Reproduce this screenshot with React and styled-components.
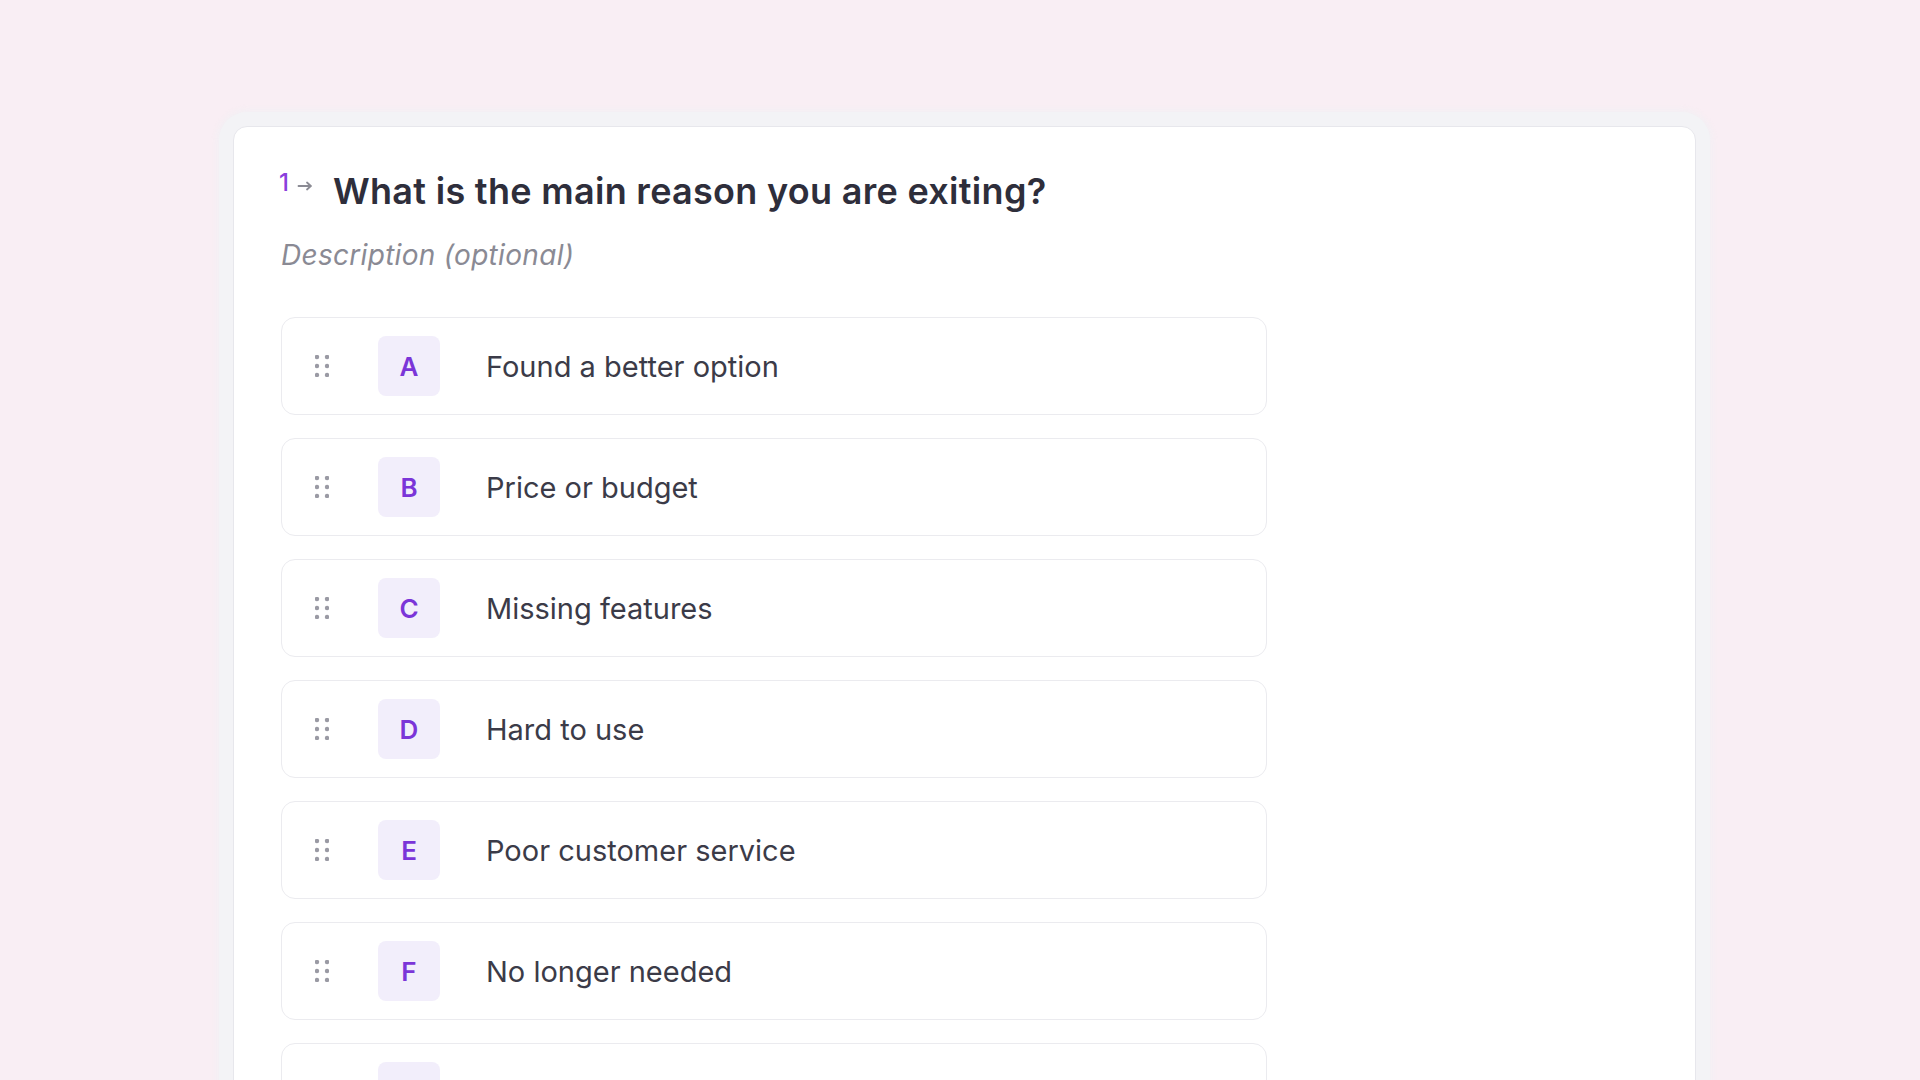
import React from 'react';
import styled, { createGlobalStyle } from 'styled-components';

const GlobalStyle = createGlobalStyle`
  html, body {
    margin: 0;
    padding: 0;
    height: 100%;
    overflow: hidden;
    background: #f9eef4;
    font-family: Inter, "Liberation Sans", sans-serif;
  }
`;

const options = [
  { key: 'A', label: 'Found a better option' },
  { key: 'B', label: 'Price or budget' },
  { key: 'C', label: 'Missing features' },
  { key: 'D', label: 'Hard to use' },
  { key: 'E', label: 'Poor customer service' },
  { key: 'F', label: 'No longer needed' },
  { key: 'G', label: 'Other' },
];

const DragHandle = () => (
  <svg width="14" height="22" viewBox="0 0 14 22">
    {[2, 11, 20].map(cy => (
      <g key={cy} fill="#9a9aa4">
        <circle cx="2" cy={cy} r="2.2" />
        <circle cx="12" cy={cy} r="2.2" />
      </g>
    ))}
  </svg>
);

const Arrow = () => (
  <svg width="16" height="10" viewBox="0 0 16 10" fill="none" stroke="#8b8b94" strokeWidth="1.8" strokeLinecap="round" strokeLinejoin="round">
    <path d="M1.5 5h12.5M10 1.5 13.8 5 10 8.5" />
  </svg>
);

export default function App() {
  return (
    <>
      <GlobalStyle />
      <Page>
        <Card>
          <Header>
            <Number>1</Number>
            <ArrowWrap><Arrow /></ArrowWrap>
            <Title>What is the main reason you are exiting?</Title>
          </Header>
          <Description>Description (optional)</Description>
          <OptionList>
            {options.map(o => (
              <OptionRow key={o.key}>
                <Handle><DragHandle /></Handle>
                <Badge>{o.key}</Badge>
                <Label>{o.label}</Label>
              </OptionRow>
            ))}
          </OptionList>
        </Card>
      </Page>
    </>
  );
}

// page wrapper
const Page = styled.div`
  padding: 126px 0 0 233px;
  display: flex;
`;

// white question card with pale halo
const Card = styled.div`
  width: 1463px;
  box-sizing: border-box;
  min-height: 1000px;
  background: #fff;
  border: 1px solid #e7e7ec;
  border-radius: 14px;
  padding: 44px 47px;
  box-shadow: 0 0 0 14px #f3f3f6, 0 0 6px 16px rgba(240, 240, 244, 0.8);
`;

const Header = styled.div`
  display: flex;
  align-items: flex-start;
`;

const Number = styled.span`
  margin-left: -2px;
  font-size: 24px;
  line-height: 24px;
  font-weight: 500;
  color: #8a3fdc;
`;

const ArrowWrap = styled.span`
  display: flex;
  margin: 10px 0 0 8px;
`;

const Title = styled.h1`
  margin: 0 0 0 20px;
  font-size: 36px;
  line-height: 40px;
  font-weight: 600;
  letter-spacing: 0.3px;
  color: #2e2e3b;
`;

const Description = styled.div`
  margin-top: 28px;
  font-size: 28px;
  line-height: 32px;
  font-style: italic;
  color: #8a8a94;
  letter-spacing: 0.3px;
`;

const OptionList = styled.div`
  margin-top: 46px;
  width: 986px;
  display: flex;
  flex-direction: column;
  gap: 23px;
`;

const OptionRow = styled.div`
  height: 98px;
  box-sizing: border-box;
  display: flex;
  align-items: center;
  padding-left: 33px;
  border: 1px solid #ebebef;
  border-radius: 14px;
  background: #fff;
`;

const Handle = styled.span`
  display: flex;
  width: 14px;
`;

const Badge = styled.span`
  margin-left: 49px;
  width: 62px;
  height: 60px;
  border-radius: 8px;
  background: #f2eefb;
  display: flex;
  align-items: center;
  justify-content: center;
  font-size: 26px;
  font-weight: 600;
  color: #7b35d8;
`;

const Label = styled.span`
  margin-left: 46px;
  font-size: 29px;
  color: #3b3b48;
`;
